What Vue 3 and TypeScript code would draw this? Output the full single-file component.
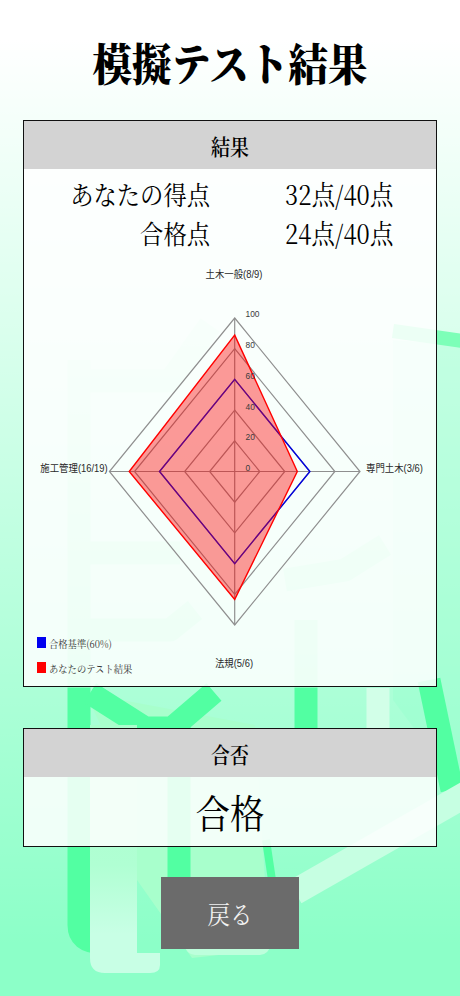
<script setup lang="ts">
const cx = 234.7, cy = 471.5, rx = 125.3, ry = 153.5
const pt = (i: number, v: number): string => {
  const dx = [0, 1, 0, -1][i], dy = [-1, 0, 1, 0][i]
  return `${(cx + dx * rx * v).toFixed(1)},${(cy + dy * ry * v).toFixed(1)}`
}
const poly = (vals: number[]) => vals.map((v, i) => pt(i, v)).join(' ')
const rings = [0.2, 0.4, 0.6, 0.8, 1].map(v => poly([v, v, v, v]))
const blue = poly([0.6, 0.6, 0.6, 0.6])
const red = poly([8 / 9, 0.5, 5 / 6, 16 / 19])
const ticks = [0, 20, 40, 60, 80, 100]
</script>

<template>
  <main class="page">
    <svg class="bg" viewBox="0 0 460 996" aria-hidden="true">
      <g fill="none" stroke="#52ffa2" stroke-width="23" stroke-linejoin="round">
        <path d="M79 360 L79 688" />
        <path d="M68 381 L170 381 L210 325" />
        <path d="M68 553 L180 553" />
        <path d="M70 630 L170 630 L195 610" />
        <path d="M306 620 L306 688" />
        <path d="M285 580 L345 570 L385 545" />
      </g>
    </svg>
    <div class="veil"></div>
    <svg class="bg" viewBox="0 0 460 996" aria-hidden="true">
      <defs>
        <linearGradient id="paleBar" x1="0" y1="700" x2="0" y2="975" gradientUnits="userSpaceOnUse">
          <stop offset="0" stop-color="#a8ffcc" />
          <stop offset="0.6" stop-color="#b0ffd3" />
          <stop offset="0.85" stop-color="#c8ffe5" />
          <stop offset="1" stop-color="#c8ffe5" />
        </linearGradient>
      </defs>
      <path d="M393 340 L460 345 L460 790 L393 700 Z" fill="#8cffc8" fill-opacity="0.28" />
      <path d="M393 331 L470 342" fill="none" stroke="#7dffb8" stroke-width="14" />
      <path d="M90 703 L100 696 L255 725 L265 880 L262 950 L192 958 L137 880 L137 800 Z" fill="#a8ffcc" />
      <g fill="none" stroke="#52ffa2" stroke-width="23" stroke-linejoin="round">
        <path d="M79 688 L79 925 Q79 942 100 942 L130 942" />
        <path d="M90 693 L145 728 L172 728 L214 692" />
        <path d="M179 720 L179 880" />
        <path d="M306 688 L306 730" />
        <path d="M266 840 L272 880" stroke-width="8" />
        <path d="M429 680 L452 790" />
      </g>
      <g fill="none" stroke-linejoin="round">
        <path d="M90 725 H137 V953 H160 V965 Q160 973 150 973 H105 Q90 973 90 958 Z" fill="url(#paleBar)" />
        <path d="M295 892 L470 792" stroke-width="26" stroke="#c6ffe2" />
        <path d="M378 688 L378 730" stroke-width="23" stroke="#d2ffe8" />
        <path d="M195 945 L260 945" stroke-width="20" stroke-linecap="round" stroke="#bdffdc" />
      </g>
    </svg>

    <h1 class="title"><span class="tall">模擬テスト結果</span></h1>

    <section class="card result">
      <h2 class="head"><span class="tall">結果</span></h2>
      <div class="scores">
        <span class="lab tall">あなたの得点</span><span class="val tall">32点/40点</span>
        <span class="lab tall">合格点</span><span class="val tall">24点/40点</span>
      </div>
      <div class="chart-area">
        <svg class="chart" viewBox="0 0 460 996">
          <polygon v-for="(r, i) in rings" :key="i" :points="r" fill="none" stroke="#8f8f8f" stroke-width="1.2" />
          <line :x1="cx" :y1="cy - ry" :x2="cx" :y2="cy + ry" stroke="#8f8f8f" stroke-width="1.2" />
          <line :x1="cx - rx" :y1="cy" :x2="cx + rx" :y2="cy" stroke="#8f8f8f" stroke-width="1.2" />
          <polygon :points="blue" fill="none" stroke="#0000e0" stroke-width="1.4" />
          <polygon :points="red" fill="rgba(255,0,0,0.4)" stroke="#f00" stroke-width="1.4" />
          <g class="tick">
            <text v-for="(t, i) in ticks" :key="t" x="245.5" :y="471 - i * 30.9">{{ t }}</text>
          </g>
          <g class="axis">
            <text x="234" y="277.5" text-anchor="middle">土木一般(8/9)</text>
            <text x="394.5" y="472" text-anchor="middle">専門土木(3/6)</text>
            <text x="234" y="667" text-anchor="middle">法規(5/6)</text>
            <text x="74" y="472" text-anchor="middle">施工管理(16/19)</text>
          </g>
        </svg>
        <ul class="legend">
          <li><i class="sw blue"></i><span class="tall">合格基準(60%)</span></li>
          <li><i class="sw red"></i><span class="tall">あなたのテスト結果</span></li>
        </ul>
      </div>
    </section>

    <section class="card pass">
      <h2 class="head"><span class="tall">合否</span></h2>
      <p class="verdict"><span class="tall">合格</span></p>
    </section>

    <button class="back"><span class="tall">戻る</span></button>
  </main>
</template>

<style>
html, body { margin: 0; padding: 0; }
</style>

<style scoped>
.page {
  position: relative;
  width: 460px;
  height: 996px;
  overflow: hidden;
  box-sizing: border-box;
  padding-top: 32px;
  display: flex;
  flex-direction: column;
  align-items: center;
  background: #8cffc8;
  font-family: "Noto Serif CJK JP", "Liberation Serif", "Noto Sans CJK JP", serif;
  color: #000;
}
.bg { position: absolute; inset: 0; width: 460px; height: 996px; }
.veil {
  position: absolute;
  inset: 0;
  background: linear-gradient(180deg, #fff 4%, rgba(255, 255, 255, 0) 95%);
}
.tall { display: inline-block; transform: scaleY(1.13); }
.title {
  position: relative;
  margin: 0;
  font-size: 39.5px;
  line-height: 60px;
  font-weight: 900;
  white-space: nowrap;
}
.card {
  position: relative;
  width: 414px;
  box-sizing: border-box;
  border: 1px solid #111;
  background: rgba(255, 255, 255, 0.85);
}
.result { margin-top: 28px; height: 567px; }
.pass { margin-top: 41px; height: 119px; }
.head {
  margin: 0;
  height: 48px;
  background: #d3d3d3;
  display: flex;
  align-items: center;
  justify-content: center;
  font-size: 19px;
  font-weight: 600;
}
.scores {
  display: grid;
  grid-template-columns: 186px 1fr;
  column-gap: 75px;
  row-gap: 1px;
  font-size: 23.3px;
  line-height: 38px;
  padding-top: 6px;
}
.lab { justify-self: end; }
.val { white-space: nowrap; font-size: 23.7px; }
.chart-area { position: absolute; left: -24px; top: -121px; width: 460px; height: 996px; }
.chart { position: absolute; inset: 0; width: 460px; height: 996px; }
.chart text { transform-box: fill-box; transform-origin: center; transform: scaleY(1.13); }
.tick text { font: 8.4px "Liberation Sans", sans-serif; fill: #3c3c3c; }
.axis text { font: 9.4px "Liberation Sans", "Noto Sans CJK JP", sans-serif; fill: #2a2a2a; }
.legend {
  position: absolute;
  left: 36.5px;
  top: 630px;
  margin: 0;
  padding: 0;
  list-style: none;
  font-size: 9.3px;
  color: #333;
}
.legend li { display: flex; align-items: center; gap: 3px; height: 25px; }
.sw { display: block; width: 9.5px; height: 11px; }
.sw.blue { background: #0000f0; }
.sw.red { background: #f00; }
.verdict {
  margin: 0;
  text-align: center;
  font-size: 34.5px;
  line-height: 68px;
}
.back {
  position: relative;
  margin-top: 30px;
  width: 138px;
  height: 72px;
  padding: 0;
  border: 0;
  background: #6b6b6b;
  color: #f2f2f2;
  font-family: inherit;
  font-size: 22.5px;
}
</style>
